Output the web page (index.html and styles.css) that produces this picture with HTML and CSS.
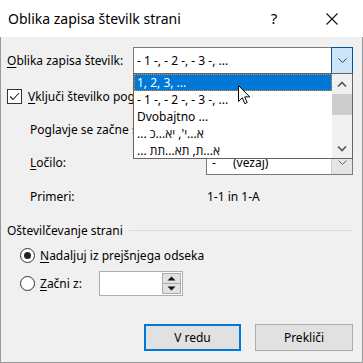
FILE: index.html
```html
<!DOCTYPE html>
<html lang="sl">

<head>
    <meta charset="UTF-8">
    <title>Oblika zapisa številk strani</title>
    <link rel="stylesheet" href="styles.css">
</head>

<body>
    <div class="dialog">
        <div class="titlebar">
            <span class="title">Oblika zapisa številk strani</span>
            <span class="help">?</span>
            <span class="close">
                <svg width="12" height="12" viewBox="0 0 12 12">
                    <path d="M0.5 0.5 L11.5 11.5 M11.5 0.5 L0.5 11.5" stroke="#111" stroke-width="1.1" fill="none" />
                </svg>
            </span>
        </div>

        <div class="content">
            <div class="row row-format">
                <span class="label-format"><u>O</u>blika zapisa številk:</span>
                <div class="combo combo-format">
                    <span class="combo-text">- 1 -, - 2 -, - 3 -, ...</span>
                    <span class="combo-btn focused">
                        <svg width="9" height="5" viewBox="0 0 9 5">
                            <path d="M0.5 0.5 L4.5 4.5 L8.5 0.5" stroke="#444" stroke-width="1" fill="none" />
                        </svg>
                    </span>

                    <div class="droplist">
                        <div class="items">
                            <div class="item selected">1, 2, 3, ...</div>
                            <div class="item">- 1 -, - 2 -, - 3 -, ...</div>
                            <div class="item">Dvobajtno ...</div>
                            <div class="item"><span dir="rtl">א...י', יא...כ ...</span></div>
                            <div class="item"><span dir="rtl">א...ת, תא...תת ...</span></div>
                        </div>
                        <div class="scrollbar">
                            <span class="sb-arrow">
                                <svg width="10" height="6" viewBox="0 0 10 6">
                                    <path d="M1 5.5 L5 1.5 L9 5.5" stroke="#555" stroke-width="1.6" fill="none" />
                                </svg>
                            </span>
                            <span class="sb-thumb"></span>
                            <span class="sb-arrow sb-down">
                                <svg width="10" height="6" viewBox="0 0 10 6">
                                    <path d="M1 0.5 L5 4.5 L9 0.5" stroke="#555" stroke-width="1.6" fill="none" />
                                </svg>
                            </span>
                        </div>
                    </div>
                </div>
            </div>

            <div class="row row-check">
                <span class="checkbox">
                    <svg width="13" height="13" viewBox="0 0 13 13">
                        <path d="M2 6.5 L5 9.5 L11 3" stroke="#222" stroke-width="1.1" fill="none" />
                    </svg>
                </span>
                <span><u>V</u>ključi številko poglavja</span>
            </div>

            <div class="indent">
                <div class="row row-style">
                    <span class="label-indent">Poglavje se začne s slogom</span>
                    <div class="combo combo-small">
                        <span class="combo-text"></span>
                        <span class="combo-btn"></span>
                    </div>
                </div>
                <div class="row row-sep">
                    <span class="label-indent"><u>L</u>očilo:</span>
                    <div class="combo combo-small">
                        <span class="combo-text"><span class="sep-char">-</span>(vezaj)</span>
                        <span class="combo-btn gray">
                            <svg width="9" height="5" viewBox="0 0 9 5">
                                <path d="M0.5 0.5 L4.5 4.5 L8.5 0.5" stroke="#666" stroke-width="1" fill="none" />
                            </svg>
                        </span>
                    </div>
                </div>
                <div class="row row-example">
                    <span class="label-indent">Primeri:</span>
                    <span class="example">1-1 in 1-A</span>
                </div>
            </div>

            <div class="group-head">
                <span>Oštevilčevanje strani</span>
                <span class="group-line"></span>
            </div>

            <div class="row row-radio">
                <span class="radio checked"></span>
                <span><u>N</u>adaljuj iz prejšnjega odseka</span>
            </div>
            <div class="row row-radio2">
                <span class="radio"></span>
                <span class="label-start"><u>Z</u>ačni z:</span>
                <div class="spin">
                    <span class="spin-field"></span>
                    <span class="spin-btns">
                        <span class="spin-btn">
                            <svg width="9" height="5" viewBox="0 0 9 5"><path d="M0.5 4.5 L4.5 0.5 L8.5 4.5 Z" fill="#111" /></svg>
                        </span>
                        <span class="spin-btn">
                            <svg width="9" height="5" viewBox="0 0 9 5"><path d="M0.5 0.5 L4.5 4.5 L8.5 0.5 Z" fill="#111" /></svg>
                        </span>
                    </span>
                </div>
            </div>

            <div class="buttons">
                <button class="btn default">V redu</button>
                <button class="btn">Prekliči</button>
            </div>
        </div>

        <svg class="cursor" width="13" height="20" viewBox="0 0 13 20">
            <path d="M0.5 0.5 L0.5 16.5 L4.3 12.8 L6.8 18.6 L9.2 17.6 L6.7 11.9 L11.7 11.9 Z" fill="#fff" stroke="#000" stroke-width="1" stroke-linejoin="miter" />
        </svg>
    </div>
</body>

</html>
```

FILE: styles.css
```css
* {
    box-sizing: border-box;
}

body {
    margin: 0;
    font-family: "Noto Sans", "Open Sans", sans-serif;
    font-size: 12px;
    color: #000;
}

.dialog {
    width: 363px;
    height: 363px;
    display: flex;
    flex-direction: column;
    position: relative;
}

.titlebar {
    height: 37px;
    background-color: white;
    display: flex;
    align-items: center;
    padding-left: 8px;
}

.title {
    font-size: 14px;
    flex: 1;
    padding-bottom: 1px;
}

.help {
    font-size: 15px;
    width: 20px;
    margin-right: 42px;
    text-align: center;
    padding-bottom: 1px;
}

.close {
    width: 12px;
    height: 12px;
    margin-right: 25px;
    display: flex;
}

.content {
    flex: 1;
    background-color: #f0f0f0;
    border: 1px solid #9a9a9a;
    border-top: none;
    padding: 10px 9px 0 6px;
    display: flex;
    flex-direction: column;
}

.row {
    display: flex;
    align-items: center;
}

.row-format {
    height: 27px;
}

.label-format {
    width: 126px;
}

u {
    text-decoration-thickness: 1px;
    text-underline-offset: 2px;
}

/* combo boxes */
.combo {
    display: flex;
    align-items: stretch;
    background-color: white;
    border: 1px solid #7a7a7a;
    position: relative;
}

.combo-format {
    width: 220px;
    height: 27px;
}

.combo-text {
    flex: 1;
    display: flex;
    align-items: center;
    padding-left: 3px;
}

.combo-btn {
    width: 21px;
    display: flex;
    align-items: center;
    justify-content: center;
}

.combo-btn.focused {
    margin: -1px -1px -1px 0;
    border: 1px solid #005499;
    background-color: #cce4f7;
    width: 22px;
}

.combo-btn.gray {
    background-color: #e5e5e5;
    border-left: 1px solid #cfcfcf;
}

.droplist {
    position: absolute;
    top: 25px;
    left: -1px;
    width: 220px;
    height: 86px;
    background-color: white;
    border: 1px solid #646464;
    display: flex;
    z-index: 2;
}

.items {
    flex: 1;
}

.item {
    height: 17px;
    line-height: 15px;
    padding-left: 2px;
    white-space: nowrap;
    border: 1px solid transparent;
}

.item span {
    display: inline-block;
}

.item.selected {
    background-color: #0078d7;
    color: white;
    border: 1px dotted #f08c28;
}

.scrollbar {
    width: 20px;
    background-color: #f0f0f0;
    display: flex;
    flex-direction: column;
    align-items: center;
}

.sb-arrow {
    height: 20px;
    display: flex;
    align-items: center;
    justify-content: center;
}

.sb-thumb {
    width: 100%;
    height: 21px;
    background-color: #cdcdcd;
}

.sb-down {
    margin-top: auto;
    height: 19px;
}

/* chapter rows */
.row-check {
    margin-top: 14px;
    height: 16px;
}

.checkbox {
    width: 15px;
    height: 15px;
    border: 1px solid #333;
    background-color: white;
    display: flex;
    margin-right: 6px;
}

.indent {
    padding-left: 23px;
}

.label-indent {
    width: 176px;
    white-space: nowrap;
}

.combo-small {
    width: 147px;
    height: 26px;
}

.row-style {
    margin-top: 12px;
}

.row-sep {
    margin-top: 7px;
}

.sep-char {
    width: 23px;
    padding-left: 2px;
}

.row-example {
    margin-top: 11px;
    height: 20px;
}

.example {
    padding-left: 1px;
}

/* page numbering */
.group-head {
    margin-top: 14px;
    height: 20px;
    display: flex;
    align-items: center;
}

.group-line {
    flex: 1;
    height: 1px;
    background-color: #dcdcdc;
    margin-left: 6px;
}

.row-radio {
    margin-top: 5px;
    height: 20px;
    padding-left: 13px;
}

.row-radio2 {
    margin-top: 5px;
    height: 26px;
    padding-left: 13px;
}

.radio {
    width: 15px;
    height: 15px;
    border: 1px solid #333;
    border-radius: 50%;
    background-color: white;
    margin-right: 5px;
    display: flex;
    align-items: center;
    justify-content: center;
}

.radio.checked::after {
    content: "";
    width: 7px;
    height: 7px;
    border-radius: 50%;
    background-color: #222;
}

.label-start {
    width: 59px;
}

.spin {
    width: 84px;
    height: 25px;
    border: 1px solid #adadad;
    background-color: white;
    display: flex;
}

.spin-field {
    flex: 1;
}

.spin-btns {
    width: 20px;
    display: flex;
    flex-direction: column;
    padding: 1px 1px 1px 0;
}

.spin-btn {
    flex: 1;
    background-color: #e1e1e1;
    border: 1px solid #adadad;
    display: flex;
    align-items: center;
    justify-content: center;
}

.spin-btn + .spin-btn {
    border-top: none;
}

/* buttons */
.buttons {
    margin-top: 28px;
    display: flex;
    justify-content: flex-end;
    gap: 14px;
}

.btn {
    width: 98px;
    height: 27px;
    background-color: #e1e1e1;
    border: 1px solid #adadad;
    font-family: inherit;
    font-size: 12px;
    color: #000;
    padding: 0;
}

.btn.default {
    border: 2px solid #0078d7;
    width: 97px;
}

.cursor {
    position: absolute;
    left: 238px;
    top: 85px;
    z-index: 5;
}
```
